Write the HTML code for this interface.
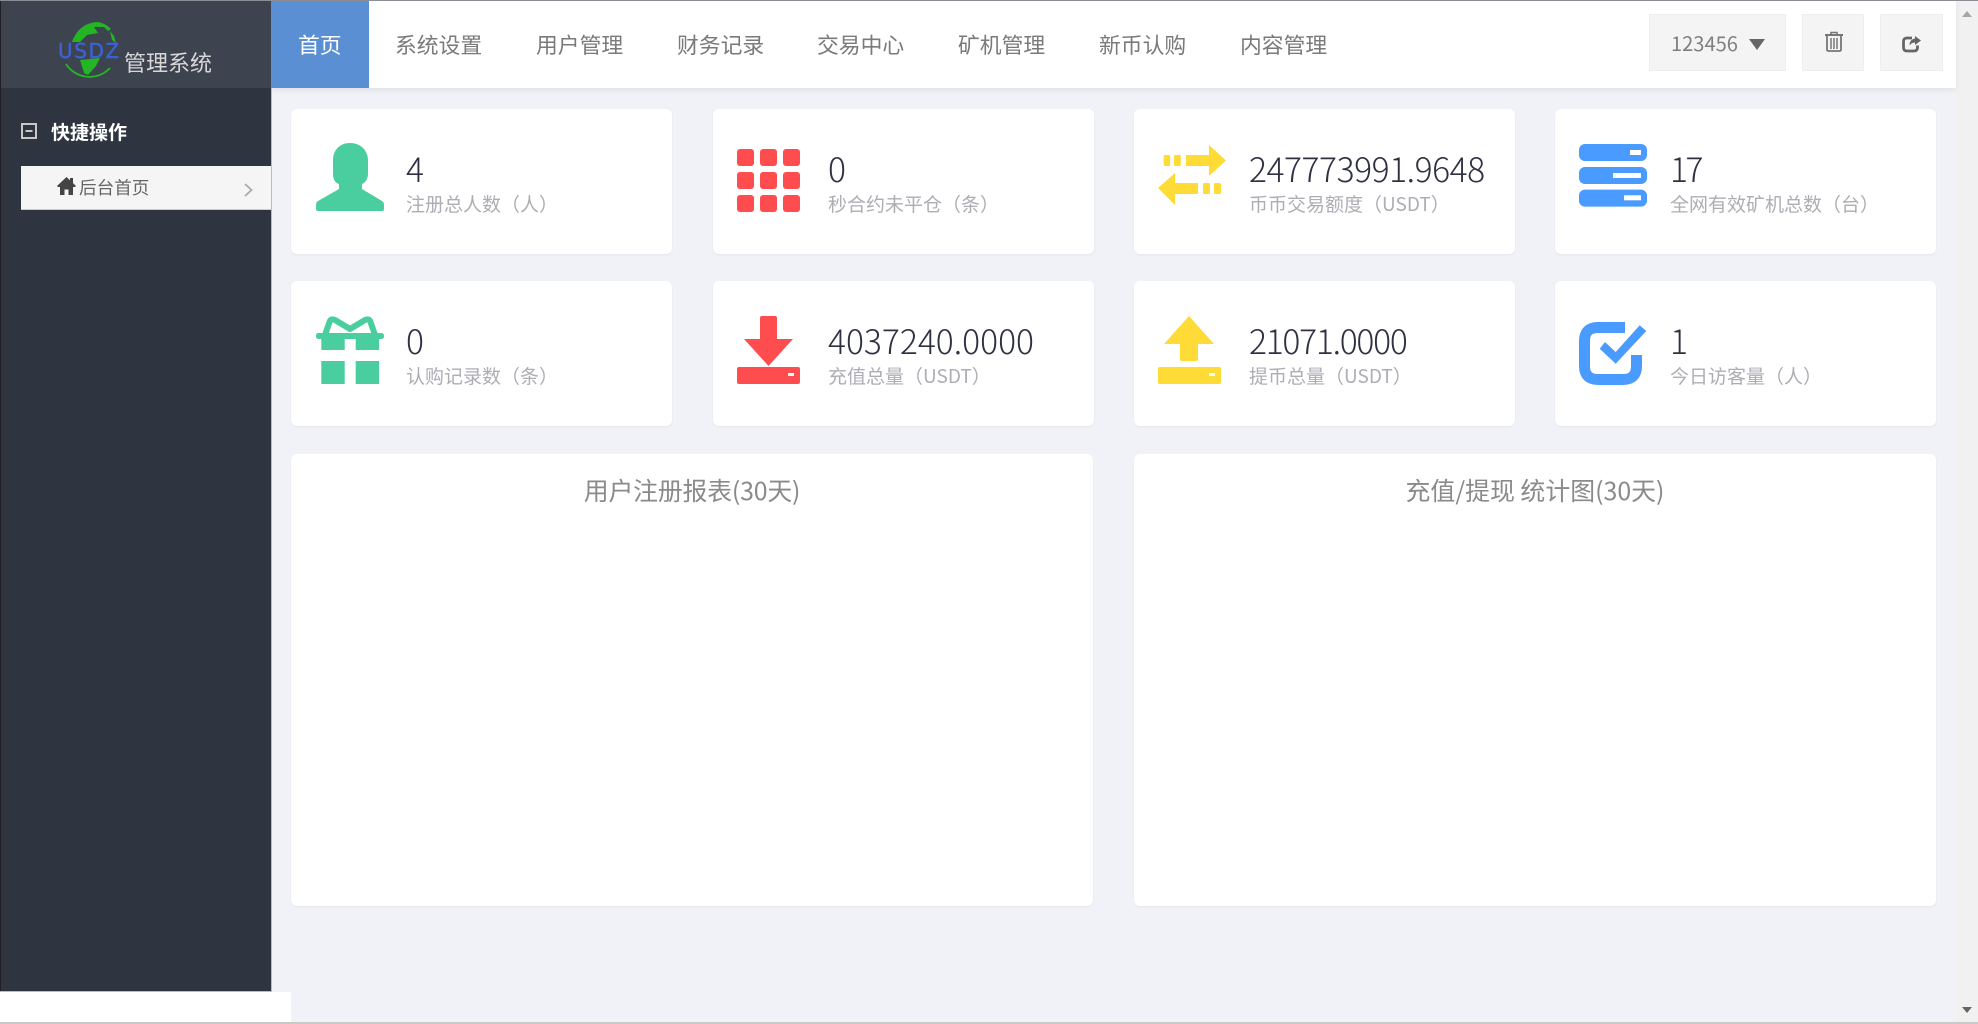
<!DOCTYPE html>
<html lang="zh-CN"><head><meta charset="utf-8"><title>管理系统</title>
<style>
*{margin:0;padding:0;box-sizing:border-box}
html,body{width:1978px;height:1024px;overflow:hidden;background:#f0f2f7}
body{font-family:"Liberation Sans","Noto Sans CJK SC",sans-serif;position:relative}
#w{position:absolute;left:0;top:0;width:1978px;height:1024px;filter:blur(.35px)}
.a{position:absolute;white-space:nowrap}
svg{position:absolute;overflow:visible}
.nav{position:absolute;top:0;height:88px;line-height:90px;font-size:21.8px;color:#7a7a7a;white-space:nowrap;font-family:"Noto Sans CJK SC",sans-serif;font-weight:400}
.card{position:absolute;width:381px;height:145px;background:#fff;border-radius:6px;box-shadow:0 1px 2px rgba(0,0,0,.05)}
.num{position:absolute;left:115px;top:38px;font-family:"Noto Sans CJK SC",sans-serif;font-weight:300;font-size:33.6px;line-height:42px;color:#2f3142;white-space:nowrap}
.lab{position:absolute;left:115px;top:81px;font-family:"Noto Sans CJK SC",sans-serif;font-weight:400;font-size:19px;line-height:28px;color:#adadb4;white-space:nowrap}
.panel{position:absolute;top:454px;height:452px;background:#fff;border-radius:6px;box-shadow:0 1px 2px rgba(0,0,0,.05);text-align:center;font-family:"Noto Sans CJK SC",sans-serif;font-weight:400;font-size:24.9px;color:#8a8a8a;padding-top:18px;line-height:36px}
.btn{position:absolute;top:14px;height:57px;background:#f4f4f4;border:1px solid #eee}
</style></head><body><div id="w">

<div class="a" style="left:1956px;top:0;width:22px;height:1024px;background:#f1f1f1"></div>
<svg style="left:1956px;top:0" width="22" height="1024"><path d="M6 17L11 11L16 17Z" fill="#a6a6a6"/><path d="M6 1007H16L11 1013Z" fill="#666"/></svg>

<div class="a" style="left:271px;top:0;width:1685px;height:88px;background:#fff;box-shadow:0 2px 6px rgba(0,0,0,.07)"></div>
<div class="a" style="left:271px;top:0;width:98px;height:88px;background:#5b8fd3"></div>
<div class="nav" style="left:298px;color:#fff">首页</div>
<div class="nav" style="left:395px">系统设置</div>
<div class="nav" style="left:536px">用户管理</div>
<div class="nav" style="left:677px">财务记录</div>
<div class="nav" style="left:817px">交易中心</div>
<div class="nav" style="left:958px">矿机管理</div>
<div class="nav" style="left:1099px">新币认购</div>
<div class="nav" style="left:1240px">内容管理</div>

<div class="btn" style="left:1649px;width:137px"></div>
<div class="a" style="left:1671px;top:28px;font-family:'Noto Sans CJK SC',sans-serif;font-weight:400;font-size:20.1px;line-height:30px;color:#808080">123456</div>
<svg style="left:0;top:0" width="1" height="1"><path d="M1749 39H1765L1757 50Z" fill="#666"/></svg>
<div class="btn" style="left:1802px;width:62px"></div>
<svg style="left:1825px;top:31px" width="18" height="21" viewBox="0 0 18 21"><path d="M6 3V1.500H12V3" fill="none" stroke="#777" stroke-width="1.600"/><path d="M0 4H18" stroke="#777" stroke-width="2"/><path d="M2 5V18.500Q2 20 3.500 20H14.500Q16 20 16 18.500V5" fill="none" stroke="#777" stroke-width="1.800"/><path d="M6 7V18M9 7V18M12 7V18" stroke="#777" stroke-width="1.500"/></svg>
<div class="btn" style="left:1880px;width:63px"></div>
<svg style="left:1902px;top:35px" width="20" height="18" viewBox="0 0 20 18"><path d="M10 3H5Q1.500 3 1.500 6.500V12.500Q1.500 16 5 16H12Q15.500 16 15.500 12.500V10.500" fill="none" stroke="#666" stroke-width="2.800"/><path d="M13 1L19 5.500L13 10V7.500Q9.500 7.500 7.500 10.500Q7.500 4.500 13 3.500Z" fill="#666"/></svg>

<div class="a" style="left:0;top:0;width:271px;height:992px;background:#2e3440"></div>
<div class="a" style="left:0;top:0;width:271px;height:88px;background:#3d4450"></div>
<div class="a" style="left:0;top:0;width:1px;height:992px;background:#1e2026"></div>
<div class="a" style="left:271px;top:88px;width:1px;height:904px;background:#b8bcc6"></div>
<div class="a" style="left:0;top:992px;width:291px;height:30px;background:#fff"></div>
<div class="a" style="left:0;top:991px;width:271px;height:1px;background:#b8bcc6"></div>

<svg style="left:0;top:0" width="271" height="88">
<path d="M72 42C76 30 86 22 98 22C103 23 107 25 111 29L108 31L104 27L94 27L98 33L87 35L80 42Z" fill="#23b523"/>
<path d="M110 31L114 36L116 43L112 40Z" fill="#23b523"/>
<path d="M80 60L100 58L96 66L88 75L84 73Z" fill="#23b523"/>
<path d="M66 64A28 28 0 0 0 110 68" fill="none" stroke="#23b523" stroke-width="1.800"/>
</svg>
<div class="a" style="left:58px;top:41px;width:64px;font-family:'DejaVu Sans',sans-serif;font-weight:400;font-size:20px;line-height:20px;letter-spacing:1.600px;color:#3b62d6;-webkit-text-stroke:.4px #3b62d6">USDZ</div>
<div class="a" style="left:124px;top:47px;font-family:'Noto Sans CJK SC',sans-serif;font-size:22px;line-height:30px;color:#d8d8d8">管理系统</div>

<svg style="left:21px;top:123px" width="16" height="16"><rect x="1" y="1" width="14" height="14" fill="none" stroke="#c8c8c8" stroke-width="2"/><rect x="4.500" y="7" width="7" height="2" fill="#c8c8c8"/></svg>
<div class="a" style="left:51px;top:118px;font-family:'Noto Sans CJK SC',sans-serif;font-weight:700;font-size:19px;line-height:28px;color:#fff">快捷操作</div>
<div class="a" style="left:21px;top:166px;width:250px;height:44px;background:#f5f5f5;border-bottom:1px solid #ccc"></div>
<svg style="left:57px;top:177px" width="19" height="18" viewBox="0 0 19 18"><path d="M9.500 0L13 3.300V1H16V6.100L19 9L18 10H16V18H11.500V12.500H7.500V18H3V10H1L0 9Z" fill="#444"/></svg>
<div class="a" style="left:79px;top:174px;font-family:'Noto Sans CJK SC',sans-serif;font-weight:400;font-size:17.600px;line-height:28px;color:#666">后台首页</div>
<svg style="left:244px;top:183px" width="9" height="14"><path d="M1 1L7.500 7L1 13" fill="none" stroke="#aaa" stroke-width="1.800"/></svg>

<div class="card" style="left:291px;top:109px"><svg style="left:25px;top:34px" width="68" height="68" viewBox="0 0 68 68"><path d="M34 0C45 0 52 8 52 17V31C52 36 49 40 46 41V46L66 58Q68 59 68 62V66Q68 68 66 68H2Q0 68 0 66V62Q0 59 2 58L23 46V41C19 40 17 36 17 31V17C17 8 23 0 34 0Z" fill="#4bce9f"/></svg><div class="num">4</div><div class="lab">注册总人数（人）</div></div>

<div class="card" style="left:713px;top:109px"><svg style="left:24px;top:40px" width="63" height="63" viewBox="0 0 63 63" fill="#ff4d4f"><rect width="17" height="17" rx="3"/><rect x="23" width="17" height="17" rx="3"/><rect x="46" width="17" height="17" rx="3"/><rect y="23" width="17" height="17" rx="3"/><rect x="23" y="23" width="17" height="17" rx="3"/><rect x="46" y="23" width="17" height="17" rx="3"/><rect y="46" width="17" height="17" rx="3"/><rect x="23" y="46" width="17" height="17" rx="3"/><rect x="46" y="46" width="17" height="17" rx="3"/></svg><div class="num">0</div><div class="lab">秒合约未平仓（条）</div></div>

<div class="card" style="left:1134px;top:109px"><svg style="left:24px;top:36px" width="69" height="60" viewBox="0 0 69 60" fill="#ffdb38"><rect x="5.700" y="10" width="6.500" height="11" rx="1.500"/><rect x="16" y="10" width="6.800" height="11" rx="1"/><path d="M28 10H51V0L68 15.500L51 31V21H28Z"/><path d="M17 28V38H40V49H17V60L0 43Z"/><rect x="45" y="38" width="7" height="11" rx="1"/><rect x="56" y="38" width="7" height="11" rx="1.500"/></svg><div class="num" style="letter-spacing:-.45px">247773991.9648</div><div class="lab">币币交易额度（USDT）</div></div>

<div class="card" style="left:1555px;top:109px"><svg style="left:24px;top:34.700px" width="68" height="63" viewBox="0 0 68 63"><g fill="#4a9bff"><rect width="68" height="17" rx="6"/><rect y="23" width="68" height="17" rx="6"/><rect y="45.600" width="68" height="17" rx="6"/></g><g fill="#fff"><rect x="51" y="6" width="11" height="5"/><rect x="34" y="29" width="28" height="5"/><rect x="45" y="51.300" width="17" height="5"/></g></svg><div class="num" style="letter-spacing:-2.5px">17</div><div class="lab">全网有效矿机总数（台）</div></div>

<div class="card" style="left:291px;top:281px"><svg style="left:25px;top:35px" width="68" height="68" viewBox="0 0 68 68"><g fill="#4bce9f"><rect y="17" width="68" height="6" rx="2.500"/><rect x="5.300" y="20" width="23.400" height="14"/><rect x="39.700" y="20" width="23.400" height="14"/><rect x="5.300" y="45" width="23.400" height="23"/><rect x="39.700" y="45" width="23.400" height="23"/></g><path d="M9 19L13.500 6Q15 2 19 4L34 13L49 4Q53 2 54.500 6L59 19" fill="none" stroke="#4bce9f" stroke-width="6" stroke-linejoin="round"/></svg><div class="num">0</div><div class="lab">认购记录数（条）</div></div>

<div class="card" style="left:713px;top:281px"><svg style="left:24px;top:35px" width="63" height="68" viewBox="0 0 63 68"><path d="M25 0H38Q40 0 40 2V23H56L31.500 50L7 23H23V2Q23 0 25 0Z" fill="#ff4d4f"/><path d="M2 51H61Q63 51 63 53V66Q63 68 61 68H2Q0 68 0 66V53Q0 51 2 51Z" fill="#ff4d4f"/><rect x="51" y="57" width="6" height="3" fill="#fff"/></svg><div class="num">4037240.0000</div><div class="lab">充值总量（USDT）</div></div>

<div class="card" style="left:1134px;top:281px"><svg style="left:24px;top:35px" width="63" height="68" viewBox="0 0 63 68"><path d="M31 0L56 28H40V43Q40 45 38 45H24Q22 45 22 43V28H6Z" fill="#ffdb38"/><path d="M2 51H61Q63 51 63 53V66Q63 68 61 68H2Q0 68 0 66V53Q0 51 2 51Z" fill="#ffdb38"/><rect x="51" y="57" width="6" height="3" fill="#fff"/></svg><div class="num" style="letter-spacing:-1.25px">21071.0000</div><div class="lab">提币总量（USDT）</div></div>

<div class="card" style="left:1555px;top:281px"><svg style="left:24px;top:41px" width="68" height="63" viewBox="0 0 68 63"><path d="M46 5.500H19Q5.500 5.500 5.500 19V44Q5.500 57.500 19 57.500H44Q57.500 57.500 57.500 44V33" fill="none" stroke="#4a9bff" stroke-width="11"/><path d="M20.700 26.700L26 20L36.700 30L60.700 3.300L67.300 9L36.700 41.700Z" fill="#4a9bff"/></svg><div class="num">1</div><div class="lab">今日访客量（人）</div></div>

<div class="panel" style="left:291px;width:802px;letter-spacing:-.2px">用户注册报表(30天)</div>
<div class="panel" style="left:1134px;width:802px">充值/提现 统计图(30天)</div>

<div class="a" style="left:0;top:0;width:1978px;height:1px;background:#8a8d94"></div>
<div class="a" style="left:0;top:1022px;width:1978px;height:2px;background:#c9c9c6"></div>
</div></body></html>
